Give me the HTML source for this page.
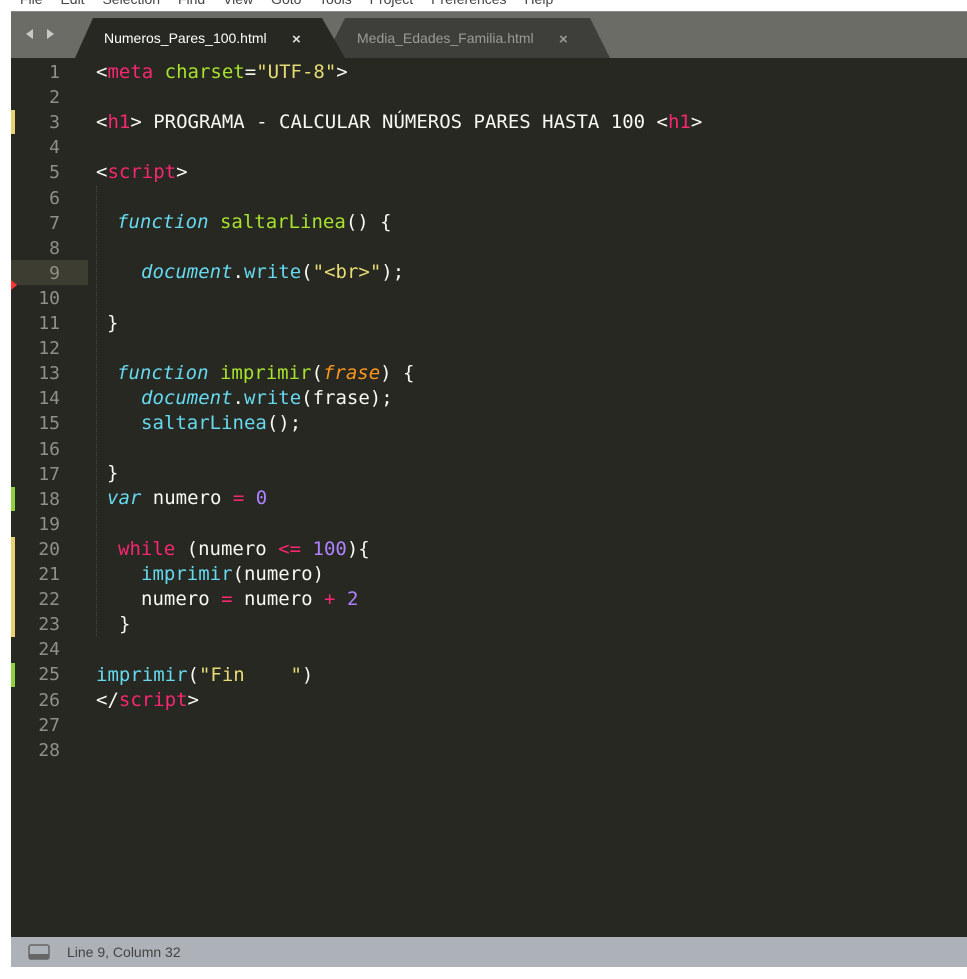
<!DOCTYPE html>
<html><head><meta charset="utf-8"><style>
body{margin:0;width:967px;height:979px;background:#fff;position:relative;overflow:hidden;font-family:"DejaVu Sans Mono","Liberation Mono",monospace}
.menu{position:absolute;left:20px;top:-9px;font:14px "Liberation Sans",sans-serif;color:#444;word-spacing:14px}
.tabbar{position:absolute;left:11px;top:11px;width:956px;height:47px;background:#6c6c66;border-top:1px solid #888}
.ed{position:absolute;left:11px;top:58px;width:956px;height:879px;background:#272822}
.status{position:absolute;left:11px;top:937px;width:956px;height:30px;background:#adb1b8;font:14px "Liberation Sans",sans-serif;color:#444}
.ln{position:absolute;left:11px;width:49px;text-align:right;color:#8f908a;font-size:18px;line-height:25px}
.c{position:absolute;font-size:19px;line-height:25px;color:#f8f8f2;white-space:pre}
.t{color:#f92672}.a{color:#a6e22e}.s{color:#e6db74}.k{color:#66d9ef;font-style:italic}.n{color:#ae81ff}.p{color:#fd971f;font-style:italic}.f{color:#66d9ef}
.mk{position:absolute;left:11px;width:4px}
</style></head><body>
<div class="menu">File Edit Selection Find View Goto Tools Project Preferences Help</div>
<div class="tabbar"></div>
<svg style="position:absolute;left:0;top:0" width="967" height="60">
<path d="M325 58 L345 18 L590 18 L610 58 Z" fill="#3e3f3a"/>
<path d="M75 58 L93 18 L322 18 L345 58 Z" fill="#272822"/>
<path d="M33 29 L26 34 L33 39 Z M47 29 L54 34 L47 39 Z" fill="#c8c8c4"/>
<text x="104" y="43" font-family="Liberation Sans,sans-serif" font-size="14" fill="#fff">Numeros_Pares_100.html</text>
<text x="292" y="44" font-family="Liberation Sans,sans-serif" font-size="15" fill="#ddd" font-weight="bold">×</text>
<text x="357" y="43" font-family="Liberation Sans,sans-serif" font-size="14" fill="#9a9a96">Media_Edades_Familia.html</text>
<text x="559" y="44" font-family="Liberation Sans,sans-serif" font-size="15" fill="#9a9a96" font-weight="bold">×</text>
</svg>
<div class="ed"></div>
<div style="position:absolute;left:11px;top:260px;width:77px;height:25px;background:#3e3d32"></div>
<div style="position:absolute;left:96px;top:186px;border-left:1px dotted #444;height:450px"></div>
<div class="mk" style="top:110px;height:24px;background:#e6d070"></div>
<div class="mk" style="top:487px;height:24px;background:#8fd13a"></div>
<div class="mk" style="top:537px;height:100px;background:#e6d070"></div>
<div class="mk" style="top:663px;height:24px;background:#8fd13a"></div>
<svg style="position:absolute;left:11px;top:280px" width="8" height="10"><path d="M0 0 L6 5 L0 10Z" fill="#f33"/></svg>
<div id="nums"></div>
<div class="c" style="left:96px;top:60px">&lt;<span class="t">meta</span> <span class="a">charset</span>=<span class="s">"UTF-8"</span>&gt;</div>
<div class="c" style="left:96px;top:110px">&lt;<span class="t">h1</span>&gt; PROGRAMA - CALCULAR NÚMEROS PARES HASTA 100 &lt;<span class="t">h1</span>&gt;</div>
<div class="c" style="left:96px;top:160px">&lt;<span class="t">script</span>&gt;</div>
<div class="c" style="left:117px;top:210px"><span class="k">function</span> <span class="a">saltarLinea</span>() {</div>
<div class="c" style="left:141px;top:260px"><span class="k">document</span>.<span class="f">write</span>(<span class="s">"&lt;br&gt;"</span>);</div>
<div class="c" style="left:107px;top:311px">}</div>
<div class="c" style="left:117px;top:361px"><span class="k">function</span> <span class="a">imprimir</span>(<span class="p">frase</span>) {</div>
<div class="c" style="left:141px;top:386px"><span class="k">document</span>.<span class="f">write</span>(frase);</div>
<div class="c" style="left:141px;top:411px"><span class="f">saltarLinea</span>();</div>
<div class="c" style="left:107px;top:461px">}</div>
<div class="c" style="left:107px;top:486px"><span class="k">var</span> numero <span class="t">=</span> <span class="n">0</span></div>
<div class="c" style="left:118px;top:537px"><span class="t">while</span> (numero <span class="t">&lt;=</span> <span class="n">100</span>){</div>
<div class="c" style="left:141px;top:562px"><span class="f">imprimir</span>(numero)</div>
<div class="c" style="left:141px;top:587px">numero <span class="t">=</span> numero <span class="t">+</span> <span class="n">2</span></div>
<div class="c" style="left:119px;top:612px">}</div>
<div class="c" style="left:96px;top:663px"><span class="f">imprimir</span>(<span class="s">"Fin    "</span>)</div>
<div class="c" style="left:96px;top:688px">&lt;/<span class="t">script</span>&gt;</div>
<div class="status"><svg style="position:absolute;left:17px;top:7px" width="22" height="16"><rect x="1" y="1" width="20" height="14" rx="2" fill="none" stroke="#666" stroke-width="1.5"/><rect x="1" y="10" width="20" height="5" fill="#666"/></svg><span style="position:absolute;left:56px;top:7px">Line 9, Column 32</span></div>
<script>
var h='';for(var i=1;i<=28;i++){h+='<div class="ln" style="top:'+(60+(i-1)*25.1)+'px">'+i+'</div>';}
document.getElementById('nums').innerHTML=h;
</script>
</body></html>
